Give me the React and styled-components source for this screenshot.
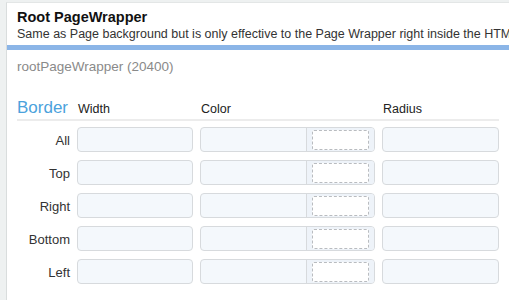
import React from "react";
import styled, { createGlobalStyle } from "styled-components";

const Global = createGlobalStyle`
  html, body { margin: 0; padding: 0; background: #eef1f1; }
  body { font-family: "Liberation Sans", Arial, sans-serif; color: #222; }
  * { box-sizing: border-box; }
`;

const Page = styled.div`
  width: 509px;
  height: 300px;
  padding: 2px 0 0 6px;
  overflow: hidden;
`;

const Panel = styled.div`
  background: #fff;
  border-left: 1px solid #d9dddd;
  border-top: 1px solid #e3e6e6;
  height: 100%;
`;

const Header = styled.div`
  padding: 4px 0 0 10px;
  height: 42px;
`;

const Title = styled.h1`
  margin: 0;
  font-size: 14.5px;
  line-height: 20px;
  font-weight: bold;
  color: #111;
`;

const Subtitle = styled.div`
  font-size: 12.5px;
  line-height: 16px;
  margin-top: -1px;
  color: #333;
  white-space: nowrap;
  overflow: hidden;
`;

const Bar = styled.div`
  height: 5px;
  background: #8bb5e7;
`;

const Body = styled.div`
  padding: 9px 0 0 10px;
`;

const Ident = styled.div`
  font-size: 13.5px;
  line-height: 16px;
  color: #8a8a8a;
`;

const Grid = styled.div`
  margin-top: 23px;
  display: grid;
  grid-template-columns: 53px 116px 175px 117px;
  column-gap: 7px;
  row-gap: 8px;
  width: 483px;
`;

const HeadRow = styled.div`
  grid-column: 1 / -1;
  display: grid;
  grid-template-columns: 53px 116px 175px 117px;
  column-gap: 7px;
  align-items: baseline;
  border-bottom: 2px solid #ececec;
  padding-bottom: 1px;
  margin-bottom: -2px;
`;

const Section = styled.div`
  font-size: 17px;
  color: #4ba2dc;
  line-height: 20px;
`;

const ColHead = styled.div`
  font-size: 12.5px;
  color: #222;
  padding-left: 1px;
`;

const RowLabel = styled.div`
  font-size: 13px;
  color: #333;
  text-align: right;
  align-self: center;
  padding-top: 1px;
`;

const Field = styled.div`
  height: 25px;
  border: 1px solid #d7dadd;
  border-radius: 4px;
  background: #f4f8fc;
`;

const ColorField = styled(Field)`
  display: flex;
  overflow: hidden;
`;

const ColorText = styled.div`
  flex: 0 0 106px;
  border-right: 1px solid #d7dadd;
`;

const SwatchWrap = styled.div`
  flex: 1;
  background: #eef3f9;
  padding: 1px 5px 1px 5px;
  display: flex;
  align-items: center;
`;

const Swatch = styled.div`
  width: 100%;
  height: 20px;
  background: #fff;
  border: 1px dashed #b9bcc0;
  border-radius: 2px;
`;

const sides = ["All", "Top", "Right", "Bottom", "Left"];

export default function App() {
  return (
    <>
      <Global />
      <Page>
        <Panel>
          <Header>
            <Title>Root PageWrapper</Title>
            <Subtitle>
              Same as Page background but is only effective to the Page Wrapper right inside the HTML body
            </Subtitle>
          </Header>
          <Bar />
          <Body>
            <Ident>rootPageWrapper (20400)</Ident>
            <Grid>
              <HeadRow>
                <Section>Border</Section>
                <ColHead>Width</ColHead>
                <ColHead>Color</ColHead>
                <ColHead>Radius</ColHead>
              </HeadRow>
              {sides.map((s) => (
                <React.Fragment key={s}>
                  <RowLabel>{s}</RowLabel>
                  <Field />
                  <ColorField>
                    <ColorText />
                    <SwatchWrap>
                      <Swatch />
                    </SwatchWrap>
                  </ColorField>
                  <Field />
                </React.Fragment>
              ))}
            </Grid>
          </Body>
        </Panel>
      </Page>
    </>
  );
}
